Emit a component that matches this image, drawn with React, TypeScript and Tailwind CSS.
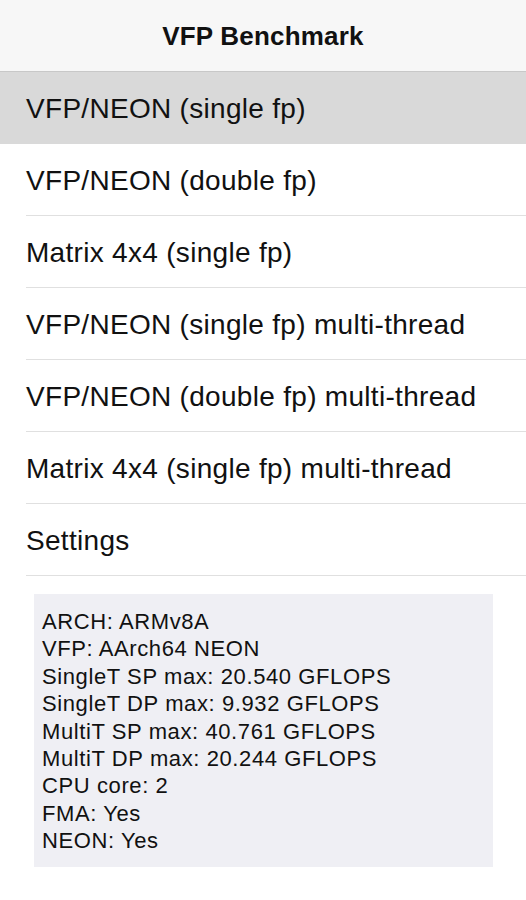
const ITEMS = [
  "VFP/NEON (single fp)",
  "VFP/NEON (double fp)",
  "Matrix 4x4 (single fp)",
  "VFP/NEON (single fp) multi-thread",
  "VFP/NEON (double fp) multi-thread",
  "Matrix 4x4 (single fp) multi-thread",
  "Settings",
];

const INFO = [
  "ARCH: ARMv8A",
  "VFP: AArch64 NEON",
  "SingleT SP max: 20.540 GFLOPS",
  "SingleT DP max: 9.932 GFLOPS",
  "MultiT SP max: 40.761 GFLOPS",
  "MultiT DP max: 20.244 GFLOPS",
  "CPU core: 2",
  "FMA: Yes",
  "NEON: Yes",
];

export default function App() {
  return (
    <div
      className="w-[526px] h-[900px] bg-white text-[#111] overflow-hidden"
      style={{ fontFamily: '"Liberation Sans", Arial, sans-serif' }}
    >
      {/* nav bar */}
      <div className="h-[72px] bg-[#f7f7f7] border-b border-[#c8c8c8] flex items-center justify-center pt-[2px]">
        <span className="text-[26px] font-bold tracking-[0.2px]">VFP Benchmark</span>
      </div>

      {/* menu */}
      <ul>
        {ITEMS.map((label, i) => (
          <li
            key={label}
            className={`h-[72px] flex flex-col ${i === 0 ? "bg-[#d9d9d9]" : ""}`}
          >
            <div className="flex-1 flex items-center pl-[26px] pt-[2px] text-[28px] tracking-[0.3px]">
              {label}
            </div>
            <div className={`h-px ml-[26px] ${i === 0 ? "" : "bg-[#e0e0e0]"}`} />
          </li>
        ))}
      </ul>

      {/* info panel */}
      <div className="pt-[18px] pl-[34px] w-[493px]">
        <div className="bg-[#efeff4] pl-[8px] pt-[14px] pb-[12px] text-[22px] tracking-[0.6px] leading-[27.4px]">
          {INFO.map((line) => (
            <div key={line}>{line}</div>
          ))}
        </div>
      </div>
    </div>
  );
}
